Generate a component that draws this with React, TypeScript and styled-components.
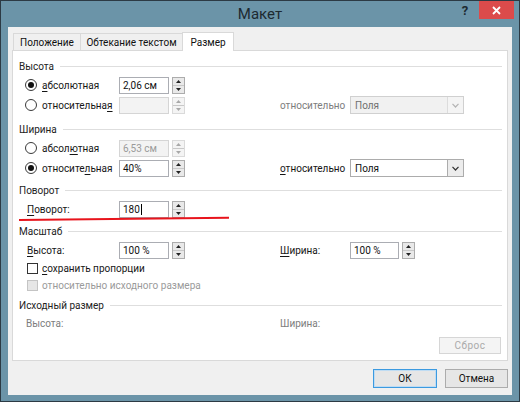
import React from 'react';
import styled, { createGlobalStyle } from 'styled-components';

// =============================================================================
// Constants
// =============================================================================

const FRAME = '#6b94a8';
const TEXT = '#161616';
const DISABLED = '#9a9a9a';
const BORDER = '#acacac';

const GlobalStyle = createGlobalStyle`
  html, body {
    margin: 0;
    padding: 0;
    background: #ffffff;
  }
  body {
    font-family: Roboto, "Noto Sans", sans-serif;
    font-size: 10px;
    color: ${TEXT};
  }
  * {
    box-sizing: border-box;
  }
`;

// =============================================================================
// Window chrome
// =============================================================================

const Window = styled.div`
  position: relative;
  width: 520px;
  height: 402px;
  display: flex;
  flex-direction: column;
  background: ${FRAME};
  border: 1px solid #2c3a44;
`;

const TitleBar = styled.div`
  height: 26px;
  display: grid;
  grid-template-columns: 1fr auto 1fr;
  align-items: start;
`;

const Title = styled.div`
  grid-column: 2;
  padding-top: 4px;
  font-size: 15px;
  color: #1d2a31;
`;

const Controls = styled.div`
  justify-self: end;
  display: flex;
  align-items: flex-start;
  padding-right: 5px;
`;

const HelpButton = styled.div`
  width: 14px;
  padding-top: 2px;
  margin-right: 7px;
  font-size: 13px;
  font-weight: 700;
  color: #1d2a31;
  text-align: center;
`;

const CloseButton = styled.div`
  width: 35px;
  height: 18px;
  display: flex;
  align-items: center;
  justify-content: center;
  background: #dc4b4b;
`;

const Client = styled.div`
  flex: 1;
  margin: 0 7px 6px 7px;
  padding: 5px 4px 7px 4px;
  display: flex;
  flex-direction: column;
  background: #f0f0f0;
`;

// =============================================================================
// Tabs + panel
// =============================================================================

const TabStrip = styled.div`
  position: relative;
  z-index: 1;
  height: 19px;
  margin-bottom: -1px;
  padding-left: 1px;
  display: flex;
  align-items: flex-start;
`;

const Tab = styled.div<{ $w: number; $active?: boolean }>`
  width: ${(p) => p.$w}px;
  height: ${(p) => (p.$active ? 19 : 17)}px;
  margin-top: ${(p) => (p.$active ? 0 : 1)}px;
  margin-left: -1px;
  display: flex;
  justify-content: center;
  padding-top: ${(p) => (p.$active ? 4 : 3)}px;
  border: 1px solid #d9d9d9;
  border-bottom: none;
  background: ${(p) => (p.$active ? '#ffffff' : '#f0f0f0')};
  color: #111111;
  white-space: nowrap;
  &:first-child {
    margin-left: 0;
  }
`;

const Panel = styled.div`
  position: relative;
  height: 311px;
  padding: 6px 0 6px 0;
  display: flex;
  flex-direction: column;
  background: #ffffff;
  border: 1px solid #d9d9d9;
`;

const Section = styled.div<{ $top?: number }>`
  display: flex;
  flex-direction: column;
  margin-top: ${(p) => p.$top ?? 0}px;
`;

const Header = styled.div`
  height: 18px;
  display: flex;
  align-items: center;
  padding: 0 5px 0 6px;
  color: #222222;
  &::after {
    content: '';
    flex: 1;
    height: 1px;
    margin-left: 6px;
    background: #dedede;
  }
`;

const Row = styled.div<{ $h?: number }>`
  height: ${(p) => p.$h ?? 20}px;
  padding-left: 12px;
  display: grid;
  grid-template-columns: 94px 66px 95px 70px 114px;
  align-items: center;
`;

const Label = styled.span<{ $disabled?: boolean; $indent?: number }>`
  padding-left: ${(p) => p.$indent ?? 0}px;
  color: ${(p) => (p.$disabled ? '#7d7d7d' : TEXT)};
  white-space: nowrap;
`;

const Key = styled.span`
  text-decoration: underline;
  text-underline-offset: 2px;
`;

const Choice = styled.label`
  display: flex;
  align-items: center;
  gap: 5px;
  white-space: nowrap;
`;

const Radio = styled.span<{ $checked?: boolean }>`
  width: 12px;
  height: 12px;
  flex: none;
  display: flex;
  align-items: center;
  justify-content: center;
  border: 1px solid #3a3a3a;
  border-radius: 50%;
  background: #ffffff;
  &::after {
    content: '';
    width: 6px;
    height: 6px;
    border-radius: 50%;
    background: ${(p) => (p.$checked ? '#111111' : 'transparent')};
  }
`;

const CheckRow = styled.label<{ $disabled?: boolean }>`
  grid-column: 1 / span 3;
  padding-left: 2px;
  display: flex;
  align-items: center;
  gap: 4px;
  white-space: nowrap;
  color: ${(p) => (p.$disabled ? DISABLED : TEXT)};
`;

const CheckBox = styled.span<{ $disabled?: boolean }>`
  width: 11px;
  height: 11px;
  flex: none;
  border: 1px solid ${(p) => (p.$disabled ? '#c4c4c4' : '#333333')};
  background: ${(p) => (p.$disabled ? '#e6e6e6' : '#ffffff')};
`;

// =============================================================================
// Spin box / select
// =============================================================================

const Spin = styled.div<{ $w?: number }>`
  width: ${(p) => p.$w ?? 66}px;
  height: 17px;
  display: flex;
  gap: 3px;
`;

const SpinField = styled.div<{ $disabled?: boolean }>`
  flex: 1;
  display: flex;
  align-items: center;
  padding-left: 3px;
  border: 1px solid ${(p) => (p.$disabled ? '#d5d5d5' : '#abadb3')};
  background: ${(p) => (p.$disabled ? '#f3f3f3' : '#ffffff')};
  color: ${(p) => (p.$disabled ? DISABLED : '#111111')};
  white-space: nowrap;
`;

const SpinArrows = styled.div<{ $disabled?: boolean }>`
  width: 13px;
  display: flex;
  flex-direction: column;
  border: 1px solid ${(p) => (p.$disabled ? '#dadada' : BORDER)};
  background: ${(p) => (p.$disabled ? '#f4f4f4' : '#e9e9e9')};
`;

const SpinHalf = styled.div`
  flex: 1;
  display: flex;
  align-items: center;
  justify-content: center;
  & + & {
    border-top: 1px solid #c8c8c8;
  }
`;

const Caret = styled.span`
  width: 1px;
  height: 11px;
  margin-left: 1px;
  background: #000000;
`;

const Select = styled.div<{ $disabled?: boolean }>`
  width: 114px;
  height: 18px;
  display: flex;
  border: 1px solid ${(p) => (p.$disabled ? '#d0d0d0' : BORDER)};
  background: ${(p) => (p.$disabled ? '#f1f1f1' : '#ffffff')};
  color: ${(p) => (p.$disabled ? '#6f6f6f' : '#111111')};
`;

const SelectText = styled.div`
  flex: 1;
  display: flex;
  align-items: center;
  padding-left: 4px;
`;

const SelectButton = styled.div<{ $disabled?: boolean }>`
  width: 16px;
  display: flex;
  align-items: center;
  justify-content: center;
  border-left: 1px solid ${(p) => (p.$disabled ? '#dcdcdc' : BORDER)};
  background: ${(p) => (p.$disabled ? '#f4f4f4' : '#ececec')};
`;

const ButtonRow = styled.div`
  height: 17px;
  margin-top: 5px;
  padding-right: 6px;
  display: flex;
  justify-content: flex-end;
`;

const Button = styled.div<{ $w: number; $h: number; $variant?: 'default' | 'disabled' }>`
  width: ${(p) => p.$w}px;
  height: ${(p) => p.$h}px;
  display: flex;
  align-items: center;
  justify-content: center;
  border: 1px solid
    ${(p) => (p.$variant === 'default' ? '#3c9ae0' : p.$variant === 'disabled' ? '#d6d6d6' : BORDER)};
  box-shadow: ${(p) => (p.$variant === 'default' ? 'inset 0 0 0 1px #bfdcf3' : 'none')};
  background: ${(p) => (p.$variant === 'disabled' ? '#f4f4f4' : '#e6e6e6')};
  color: ${(p) => (p.$variant === 'disabled' ? '#aaaaaa' : '#111111')};
  letter-spacing: ${(p) => (p.$variant === 'disabled' ? '0.5px' : '0')};
`;

const Footer = styled.div`
  padding-top: 8px;
  display: flex;
  justify-content: flex-end;
  gap: 8px;
`;

const Annotation = styled.svg`
  position: absolute;
  left: 16px;
  top: 212px;
  pointer-events: none;
`;

// =============================================================================
// Small pieces
// =============================================================================

const Arrow = ({ up, color }: { up?: boolean; color: string }) => (
  <svg width="5" height="3" viewBox="0 0 5 3">
    <polygon points={up ? '0,3 5,3 2.5,0' : '0,0 5,0 2.5,3'} fill={color} />
  </svg>
);

const SpinBox = ({
  children,
  disabled,
  w,
}: {
  children?: React.ReactNode;
  disabled?: boolean;
  w?: number;
}) => (
  <Spin $w={w}>
    <SpinField $disabled={disabled}>{children}</SpinField>
    <SpinArrows $disabled={disabled}>
      <SpinHalf>
        <Arrow up color={disabled ? '#a8a8a8' : '#222'} />
      </SpinHalf>
      <SpinHalf>
        <Arrow color={disabled ? '#a8a8a8' : '#222'} />
      </SpinHalf>
    </SpinArrows>
  </Spin>
);

const Dropdown = ({ value, disabled }: { value: string; disabled?: boolean }) => (
  <Select $disabled={disabled}>
    <SelectText>{value}</SelectText>
    <SelectButton $disabled={disabled}>
      <svg width="7" height="5" viewBox="0 0 7 5">
        <polyline
          points="0.5,0.8 3.5,4 6.5,0.8"
          fill="none"
          stroke={disabled ? '#b4b4b4' : '#333'}
          strokeWidth="1.2"
        />
      </svg>
    </SelectButton>
  </Select>
);

// =============================================================================
// Main Component
// =============================================================================

export default function App() {
  return (
    <>
      <GlobalStyle />
      <Window>
        <TitleBar>
          <Title>Макет</Title>
          <Controls>
            <HelpButton>?</HelpButton>
            <CloseButton>
              <svg width="9" height="9" viewBox="0 0 9 9">
                <path d="M1 1 L8 8 M8 1 L1 8" stroke="#fff" strokeWidth="1.8" />
              </svg>
            </CloseButton>
          </Controls>
        </TitleBar>

        <Client>
          <TabStrip>
            <Tab $w={68}>Положение</Tab>
            <Tab $w={103}>Обтекание текстом</Tab>
            <Tab $w={52} $active>
              Размер
            </Tab>
          </TabStrip>

          <Panel>
            <Section>
              <Header>Высота</Header>
              <Row>
                <Choice>
                  <Radio $checked />
                  <span>
                    <Key>а</Key>бсолютная
                  </span>
                </Choice>
                <SpinBox>2,06 см</SpinBox>
              </Row>
              <Row>
                <Choice>
                  <Radio />
                  <span>
                    относительна<Key>я</Key>
                  </span>
                </Choice>
                <SpinBox disabled />
                <span />
                <Label $disabled>относительно</Label>
                <Dropdown value="Поля" disabled />
              </Row>
            </Section>

            <Section $top={5}>
              <Header>Ширина</Header>
              <Row>
                <Choice>
                  <Radio />
                  <span>
                    абсол<Key>ю</Key>тная
                  </span>
                </Choice>
                <SpinBox disabled>6,53 см</SpinBox>
              </Row>
              <Row>
                <Choice>
                  <Radio $checked />
                  <span>
                    относите<Key>л</Key>ьная
                  </span>
                </Choice>
                <SpinBox>40%</SpinBox>
                <span />
                <Label>
                  <Key>о</Key>тносительно
                </Label>
                <Dropdown value="Поля" />
              </Row>
            </Section>

            <Section $top={3}>
              <Header>Поворот</Header>
              <Row>
                <Label $indent={2}>
                  <Key>П</Key>оворот:
                </Label>
                <SpinBox>
                  180
                  <Caret />
                </SpinBox>
              </Row>
            </Section>

            <Section $top={3}>
              <Header>Масштаб</Header>
              <Row>
                <Label $indent={2}>
                  <Key>В</Key>ысота:
                </Label>
                <SpinBox>100 %</SpinBox>
                <span />
                <Label>
                  <Key>Ш</Key>ирина:
                </Label>
                <SpinBox w={65}>100 %</SpinBox>
              </Row>
              <Row $h={17}>
                <CheckRow>
                  <CheckBox />
                  <span>
                    <Key>с</Key>охранить пропорции
                  </span>
                </CheckRow>
              </Row>
              <Row $h={17}>
                <CheckRow $disabled>
                  <CheckBox $disabled />
                  <span>относительно исходного размера</span>
                </CheckRow>
              </Row>
            </Section>

            <Section $top={2}>
              <Header>Исходный размер</Header>
              <Row $h={18}>
                <Label $disabled $indent={1}>
                  Высота:
                </Label>
                <span />
                <span />
                <Label $disabled>Ширина:</Label>
              </Row>
              <ButtonRow>
                <Button $w={62} $h={17} $variant="disabled">
                  Сброс
                </Button>
              </ButtonRow>
            </Section>
          </Panel>

          <Footer>
            <Button $w={64} $h={19} $variant="default">
              ОК
            </Button>
            <Button $w={63} $h={19}>
              Отмена
            </Button>
          </Footer>
        </Client>

        <Annotation width="214" height="10" viewBox="0 0 214 10">
          <path d="M2 7 Q 90 6.2 212 4.8" fill="none" stroke="#e8141c" strokeWidth="2" />
        </Annotation>
      </Window>
    </>
  );
}
